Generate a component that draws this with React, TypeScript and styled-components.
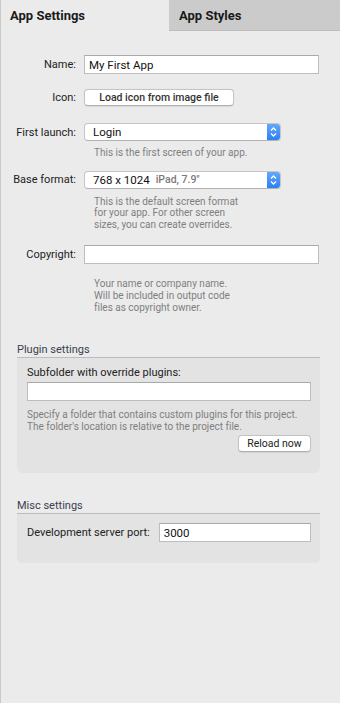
import { createGlobalStyle } from 'styled-components'
import styled from 'styled-components'

const GlobalStyle = createGlobalStyle`
  html, body {
    margin: 0;
    padding: 0;
    background: #ebebeb;
  }
  body {
    font-family: 'Roboto', 'Liberation Sans', sans-serif;
    font-feature-settings: 'calt' 0, 'liga' 0;
    color: #222;
    -webkit-font-smoothing: antialiased;
  }
`

const Stepper = () => (
  <StepperBox>
    <svg width="7" height="10" viewBox="0 0 7 10">
      <path
        d="M1 3.5 L3.5 1 L6 3.5 M1 6.5 L3.5 9 L6 6.5"
        fill="none"
        stroke="#fff"
        strokeWidth="1.3"
      />
    </svg>
  </StepperBox>
)

const App = () => {
  return (
    <Page>
      <GlobalStyle />
      <Tabs>
        <Tab active>App Settings</Tab>
        <Tab>App Styles</Tab>
      </Tabs>

      <Form>
        <Row>
          <Label>Name:</Label>
          <TextInput defaultValue="My First App" />
        </Row>

        <Row top={15}>
          <Label>Icon:</Label>
          <div>
            <PushButton wide>Load icon from image file</PushButton>
          </div>
        </Row>

        <Row top={17}>
          <Label>First launch:</Label>
          <Select>
            <SelectValue>Login</SelectValue>
            <Stepper />
          </Select>
        </Row>
        <Hint top={6}>This is the first screen of your app.</Hint>

        <Row top={12}>
          <Label>Base format:</Label>
          <Select>
            <SelectValue>
              768 x 1024 <Dim>iPad, 7.9"</Dim>
            </SelectValue>
            <Stepper />
          </Select>
        </Row>
        <Hint top={7}>
          This is the default screen format
          <br />
          for your app. For other screen
          <br />
          sizes, you can create overrides.
        </Hint>

        <Row top={15}>
          <Label>Copyright:</Label>
          <TextInput />
        </Row>
        <Hint top={14}>
          Your name or company name.
          <br />
          Will be included in output code
          <br />
          files as copyright owner.
        </Hint>
      </Form>

      <Group top={30}>
        <GroupTitle>Plugin settings</GroupTitle>
        <GroupBox>
          <BoxLabel>Subfolder with override plugins:</BoxLabel>
          <TextInput />
          <BoxHint>
            Specify a folder that contains custom plugins for this project.
            <br />
            The folder's location is relative to the project file.
          </BoxHint>
          <ButtonRow>
            <PushButton>Reload now</PushButton>
          </ButtonRow>
        </GroupBox>
      </Group>

      <Group top={26}>
        <GroupTitle>Misc settings</GroupTitle>
        <GroupBox>
          <PortRow>
            <BoxLabel>Development server port:</BoxLabel>
            <TextInput defaultValue="3000" />
          </PortRow>
        </GroupBox>
      </Group>
    </Page>
  )
}

const Page = styled.div`
  width: 340px;
  min-height: 703px;
  box-sizing: border-box;
  border-left: 1px solid #c9c9c9;
  background: #ebebeb;
`

const Tabs = styled.div`
  display: flex;
  height: 31px;
  margin-left: -1px;
`

const Tab = styled.div<{ active?: boolean }>`
  flex: ${(p) => (p.active ? '0 0 169px' : '1')};
  box-sizing: border-box;
  padding-left: ${(p) => (p.active ? '9px' : '10px')};
  display: flex;
  align-items: center;
  font-size: 13px;
  font-weight: 700;
  color: #1a1a1a;
  background: ${(p) => (p.active ? '#ebebeb' : '#cbcbcb')};
  border-bottom: ${(p) => (p.active ? 'none' : '1px solid #bdbdbd')};
  border-left: ${(p) => (p.active ? '1px solid #c9c9c9' : 'none')};
`

const Form = styled.div`
  padding: 24px 21px 0 0;
`

const Row = styled.div<{ top?: number }>`
  display: grid;
  grid-template-columns: 75px 1fr;
  column-gap: 8px;
  align-items: center;
  margin-top: ${(p) => p.top ?? 0}px;
`

const Label = styled.label`
  text-align: right;
  font-size: 11px;
  color: #222;
`

const TextInput = styled.input`
  box-sizing: border-box;
  width: 100%;
  height: 19px;
  margin: 0;
  padding: 0 4px;
  border: 1px solid #bdbdbd;
  border-top-color: #a9a9a9;
  background: #fff;
  font-family: inherit;
  font-size: 11.5px;
  color: #111;
  outline: none;
`

const PushButton = styled.button<{ wide?: boolean }>`
  height: 17px;
  padding: 0;
  width: ${(p) => (p.wide ? '150px' : '73px')};
  border: 1px solid #c4c4c4;
  border-bottom-color: #b0b0b0;
  border-radius: 4px;
  background: #fff;
  box-shadow: 0 0.5px 1px rgba(0, 0, 0, 0.08);
  font-family: inherit;
  font-size: 10.5px;
  font-weight: ${(p) => (p.wide ? 500 : 400)};
  color: ${(p) => (p.wide ? '#333' : '#222')};
  white-space: nowrap;
  display: flex;
  align-items: center;
  justify-content: center;
`

const Select = styled.div`
  width: 197px;
  height: 18px;
  box-sizing: border-box;
  display: flex;
  align-items: stretch;
  background: #fff;
  border-radius: 4px;
  border: 1px solid #c6c6c6;
  border-bottom-color: #b2b2b2;
  overflow: hidden;
`

const SelectValue = styled.div`
  flex: 1;
  display: flex;
  align-items: center;
  gap: 6px;
  padding-left: 8px;
  font-size: 11.5px;
  color: #111;
  white-space: nowrap;
`

const Dim = styled.span`
  font-size: 10.5px;
  font-weight: 500;
  color: #7a7a7a;
`

const StepperBox = styled.div`
  width: 13px;
  display: flex;
  align-items: center;
  justify-content: center;
  background: linear-gradient(#63a8fb, #2d7ff4);
`

const Hint = styled.div<{ top?: number }>`
  margin-top: ${(p) => p.top ?? 0}px;
  padding-left: 93px;
  font-size: 10px;
  line-height: 11.6px;
  color: #7f7f7f;
`

const Group = styled.div<{ top?: number }>`
  margin: ${(p) => p.top ?? 0}px 20px 0 16px;
`

const GroupTitle = styled.div`
  font-size: 11px;
  color: #3b4150;
  padding-bottom: 1px;
  border-bottom: 1px solid #bcbcbc;
`

const GroupBox = styled.div`
  background: #e3e3e3;
  border-radius: 0 0 5px 5px;
  padding: 8px 9px 21px 10px;
  display: flex;
  flex-direction: column;
`

const BoxLabel = styled.div`
  font-size: 11px;
  color: #222;
  white-space: nowrap;
  margin-bottom: 3px;
`

const BoxHint = styled.div`
  margin-top: 8px;
  font-size: 10px;
  line-height: 11.6px;
  color: #7f7f7f;
  white-space: nowrap;
`

const ButtonRow = styled.div`
  display: flex;
  justify-content: flex-end;
  margin-top: 3px;
`

const PortRow = styled.div`
  display: grid;
  grid-template-columns: auto 1fr;
  column-gap: 9px;
  align-items: center;
  margin-top: 1px;

  ${BoxLabel} {
    margin-bottom: 0;
  }
`

export default App
